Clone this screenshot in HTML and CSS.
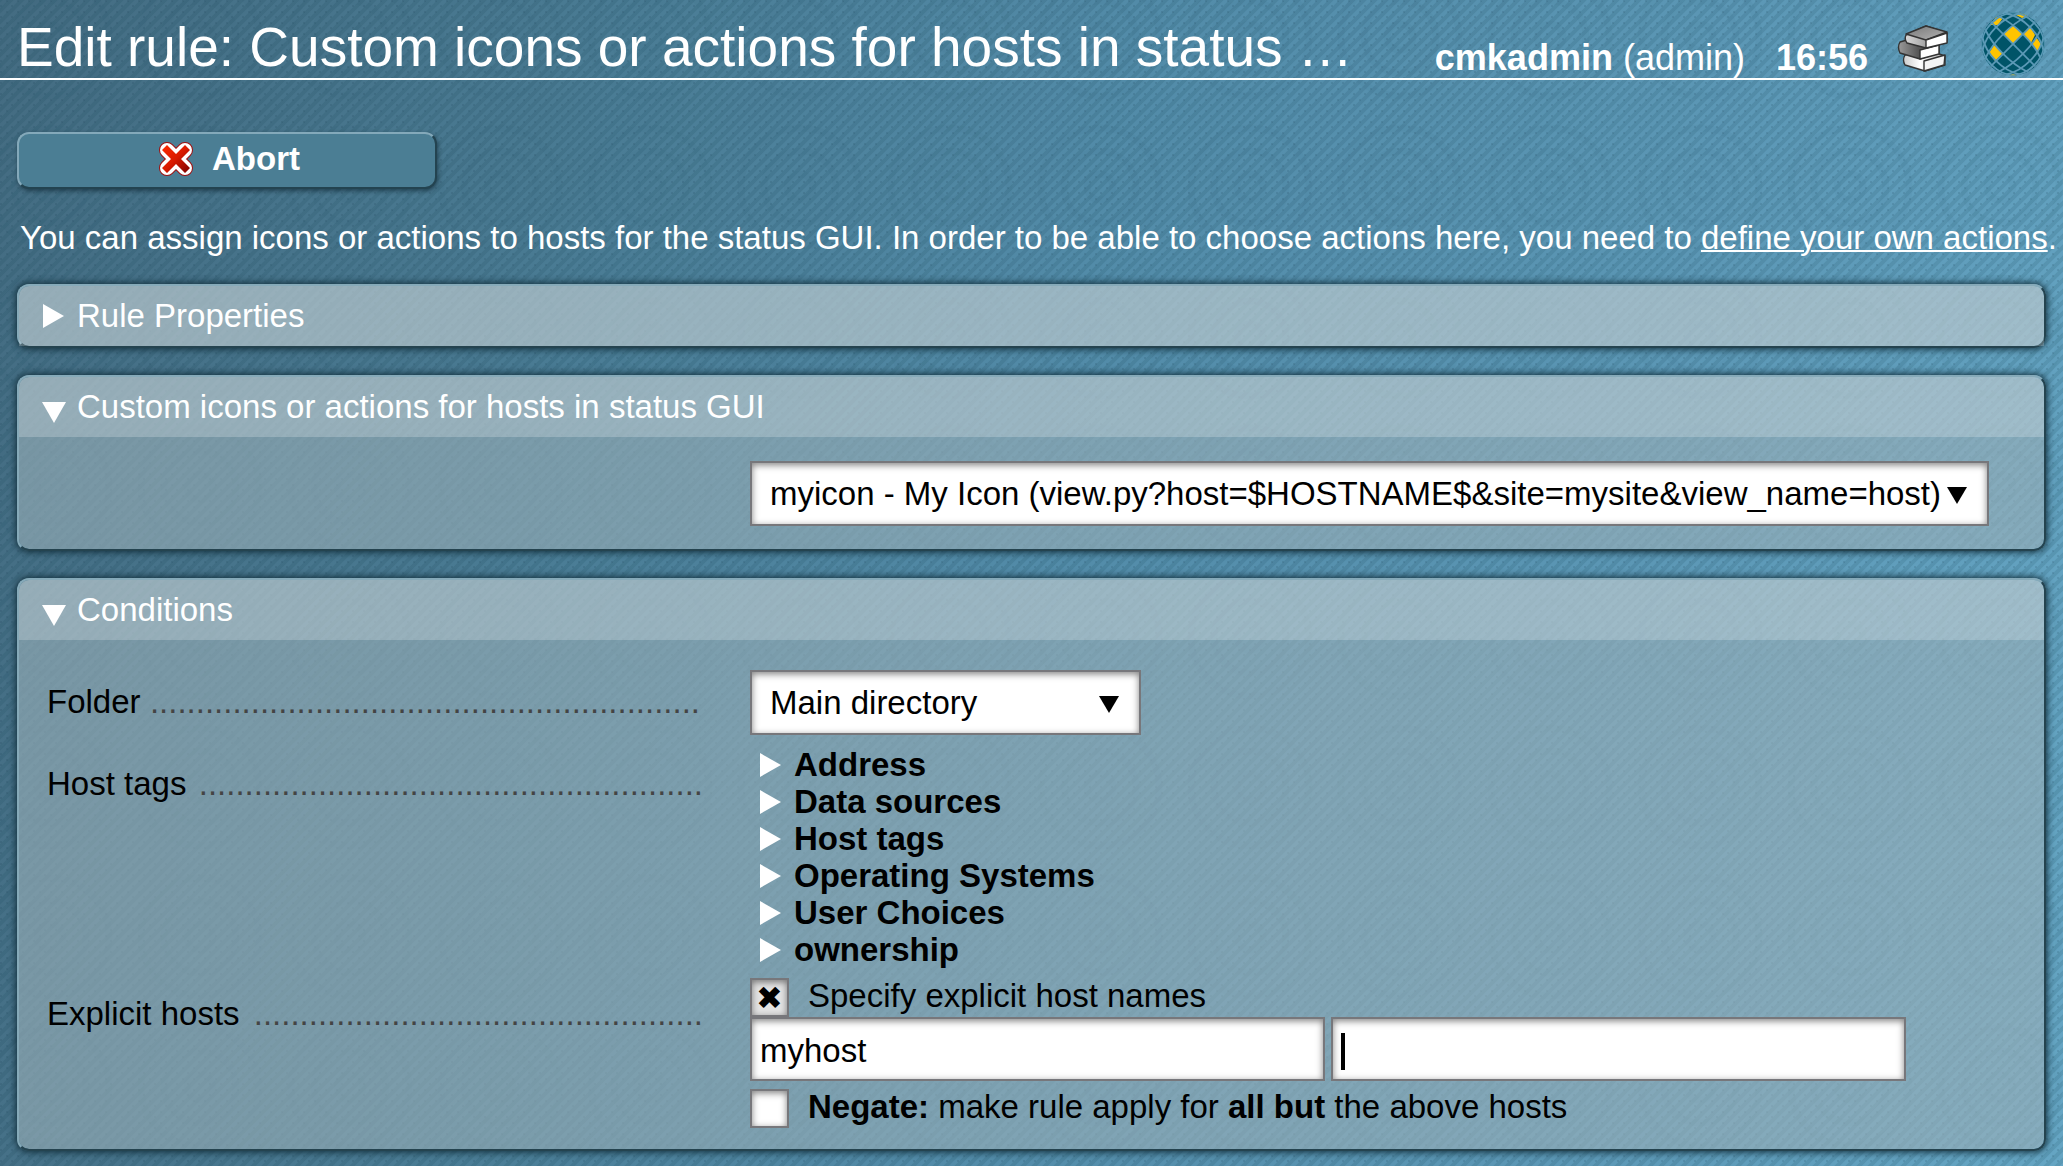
FILE: index.html
```
<!DOCTYPE html>
<html lang="en">
<head>
<meta charset="utf-8">
<title>Edit rule: Custom icons or actions for hosts in status GUI</title>
<link rel="stylesheet" href="styles.css">
</head>
<body>
<svg class="backdrop" aria-hidden="true">
  <defs>
    <pattern id="stripes" width="11" height="11" patternUnits="userSpaceOnUse">
      <path d="M-3 3L3 -3M-3 14L14 -3M8 14L14 8" stroke="#123a50" stroke-opacity=".13" stroke-width="4"/>
      <path d="M0 5h2v2h-2zM6 0h2v2h-2z" fill="#123a50" fill-opacity=".14"/>
    </pattern>
    <pattern id="rings" x="125" y="112" width="150" height="150" patternUnits="userSpaceOnUse">
      <g fill="none" stroke="#123a50" stroke-opacity=".045" stroke-width="7">
        <circle cx="75" cy="75" r="13"/><circle cx="75" cy="75" r="36"/><circle cx="75" cy="75" r="59"/>
      </g>
    </pattern>
  </defs>
  <rect width="100%" height="100%" fill="url(#stripes)"/>
  <rect width="100%" height="100%" fill="url(#rings)"/>
</svg>

<header class="top">
  <h1 class="title">Edit rule: Custom icons or actions for hosts in status …</h1>
  <p class="user"><b>cmkadmin</b> (admin)</p>
  <time class="clock">16:56</time>
  <a class="books" href="#" aria-label="Manual">
    <svg width="52" height="50" viewBox="0 0 52 50">
      <defs>
        <linearGradient id="cover" x1="0" y1="0" x2="1" y2="1"><stop offset="0" stop-color="#777"/><stop offset="1" stop-color="#b4b4b4"/></linearGradient>
        <linearGradient id="spine" x1="0" y1="0" x2="1" y2="0"><stop offset="0" stop-color="#d8d8d8"/><stop offset="1" stop-color="#707070"/></linearGradient>
        <linearGradient id="pale" x1="0" y1="0" x2="1" y2="0"><stop offset="0" stop-color="#ccc"/><stop offset=".4" stop-color="#fff"/><stop offset="1" stop-color="#aaa"/></linearGradient>
        <linearGradient id="dark" x1="0" y1="0" x2="1" y2="0"><stop offset="0" stop-color="#9a9a9a"/><stop offset=".5" stop-color="#555"/><stop offset="1" stop-color="#777"/></linearGradient>
      </defs>
      <g stroke="#333" stroke-width="1.4" stroke-linejoin="round">
        <path d="M8 31L28 25 48 32V41L28 47 8 41Q5 36 8 31Z" fill="url(#pale)"/>
        <path d="M27 37L48 31 47 41 27 47Z" fill="#f4f4f4"/>
        <path d="M3 18L24 12 42 20V29L23 35 3 29Q0 23 3 18Z" fill="url(#dark)"/>
        <path d="M23 26L42 21 42 30 23 35Z" fill="#fff"/>
        <path d="M9 11L29 2 50 9V18L29 24 10 19Q7 15 9 11Z" fill="url(#spine)"/>
        <path d="M9 10L29 2 50 8 29 16Z" fill="url(#cover)"/>
        <path d="M29 16L50 9V19L29 24Z" fill="#fff"/>
      </g>
    </svg>
  </a>
  <a class="globe" href="#" aria-label="Home">
    <svg width="64" height="64" viewBox="0 0 64 64">
      <defs><clipPath id="ball"><circle cx="32" cy="32" r="31.500"/></clipPath></defs>
      <g clip-path="url(#ball)">
        <rect width="64" height="64" fill="#005468"/>
        <g fill="#ffc400"><path d="M32 32L42 22 32 13 22 22Z"/><path d="M42 22L49 14 54 23 50 31Z"/><path d="M51 32L55 25 60 32 57 40Z"/><path d="M14 49L8 41 13 33 22 41Z"/><path d="M9 13L15 5 22 6 17 13Z"/><path d="M35 3L42 0 47 4 41 6Z"/><path d="M26 64L32 62 38 64Z"/></g>
        <g fill="none" stroke="#5b99b6" stroke-width="1.800">
          <g transform="translate(32 32) rotate(45)"><path d="M0 -40V40"/><ellipse rx="14" ry="40"/><ellipse rx="24" ry="37"/><ellipse rx="30" ry="34"/></g>
          <g transform="translate(32 32) rotate(-45)"><path d="M0 -40V40"/><ellipse rx="14" ry="40"/><ellipse rx="24" ry="37"/><ellipse rx="30" ry="34"/></g>
        </g>
      </g>
    </svg>
  </a>
</header>

<main class="page">
  <button class="abort" type="button">
    <svg width="36" height="36" viewBox="0 0 36 36" aria-hidden="true">
      <defs><linearGradient id="red" x1="0" y1="0" x2="1" y2="1"><stop offset="0" stop-color="#ff2a00"/><stop offset=".5" stop-color="#d81a00"/><stop offset="1" stop-color="#7a0000"/></linearGradient></defs>
      <path d="M9 9L27 27M27 9L9 27" stroke="#a01010" stroke-width="16" stroke-linecap="round"/>
      <path d="M9 9L27 27M27 9L9 27" stroke="#fff" stroke-width="14" stroke-linecap="round"/>
      <path d="M9 4L18 13 27 4 32 9 23 18 32 27 27 32 18 23 9 32 4 27 13 18 4 9Z" fill="url(#red)"/>
    </svg>
    Abort
  </button>

  <p class="help">You can assign icons or actions to hosts for the status GUI. In order to be able to choose actions here, you need to <a href="#">define your own actions</a>.</p>

  <section class="panel">
    <h2 class="panel-head"><svg class="arrow" viewBox="0 0 22 26" aria-hidden="true"><path d="M0 1L21 13 0 25Z"/></svg>Rule Properties</h2>
  </section>

  <section class="panel">
    <h2 class="panel-head"><svg class="arrow open" viewBox="0 0 26 22" aria-hidden="true"><path d="M1 0H25L13 21Z"/></svg>Custom icons or actions for hosts in status GUI</h2>
    <div class="icon-row">
      <span class="picker wide"><select aria-label="Icon or action"><option>myicon - My Icon (view.py?host=$HOSTNAME$&amp;site=mysite&amp;view_name=host)</option></select></span>
    </div>
  </section>

  <section class="panel">
    <h2 class="panel-head"><svg class="arrow open" viewBox="0 0 26 22" aria-hidden="true"><path d="M1 0H25L13 21Z"/></svg>Conditions</h2>
    <div class="form">
      <div class="row folder">
        <div class="legend"><label for="folder">Folder</label><span class="dots" aria-hidden="true">............................................................</span></div>
        <span class="picker"><select id="folder"><option>Main directory</option></select></span>
      </div>
      <div class="row tags">
        <div class="legend"><span>Host tags</span><span class="dots" aria-hidden="true">.......................................................</span></div>
        <ul class="tree">
          <li><svg class="arrow" viewBox="0 0 22 26" aria-hidden="true"><path d="M0 1L21 13 0 25Z"/></svg>Address</li>
          <li><svg class="arrow" viewBox="0 0 22 26" aria-hidden="true"><path d="M0 1L21 13 0 25Z"/></svg>Data sources</li>
          <li><svg class="arrow" viewBox="0 0 22 26" aria-hidden="true"><path d="M0 1L21 13 0 25Z"/></svg>Host tags</li>
          <li><svg class="arrow" viewBox="0 0 22 26" aria-hidden="true"><path d="M0 1L21 13 0 25Z"/></svg>Operating Systems</li>
          <li><svg class="arrow" viewBox="0 0 22 26" aria-hidden="true"><path d="M0 1L21 13 0 25Z"/></svg>User Choices</li>
          <li><svg class="arrow" viewBox="0 0 22 26" aria-hidden="true"><path d="M0 1L21 13 0 25Z"/></svg>ownership</li>
        </ul>
      </div>
      <div class="row hosts">
        <div class="legend"><span>Explicit hosts</span><span class="dots" aria-hidden="true">.................................................</span></div>
        <div class="host-fields">
          <label class="check"><input type="checkbox" checked>Specify explicit host names</label>
          <div class="names">
            <input type="text" value="myhost" aria-label="Host name 1">
            <span class="active"><input type="text" value="" aria-label="Host name 2" autofocus></span>
          </div>
          <label class="check negate"><input type="checkbox"><span><b>Negate:</b> make rule apply for <b>all but</b> the above hosts</span></label>
        </div>
      </div>
    </div>
  </section>
</main>
</body>
</html>
```
FILE: styles.css
```
* { box-sizing: border-box; }

body {
  position: relative;
  margin: 0;
  min-height: 100vh;
  background: linear-gradient(100deg, #446c82 0%, #497a92 25%, #528ba8 50%, #5b96b4 75%, #65a5c3 100%);
  color: #000;
  font: 33px/38px "Liberation Sans", Arial, sans-serif;
}

h1, h2, p, ul { margin: 0; padding: 0; font-weight: normal; }

.backdrop {
  position: absolute;
  inset: 0;
  width: 100%;
  height: 100%;
  z-index: -1;
}

.top {
  display: flex;
  align-items: flex-end;
  height: 80px;
  padding: 0 18px 0 17px;
  border-bottom: 2px solid #fff;
  color: #fff;
}

.title { flex: 1; font-size: 55px; line-height: 62px; white-space: nowrap; }
.user, .clock { font-size: 36px; line-height: 40px; white-space: nowrap; }
.clock { margin-left: 31px; font-weight: bold; }
.books { margin: 0 32px 4px 29px; height: 50px; }
.globe { height: 64px; margin-bottom: 2px; }
.top svg { display: block; }

.page { padding: 52px 17px 14px; }

.abort {
  display: flex;
  align-items: center;
  justify-content: center;
  gap: 18px;
  width: 420px;
  height: 57px;
  padding: 0 0 4px 4px;
  border: 2px solid;
  border-color: #84a9ba #234350 #234350 #84a9ba;
  border-radius: 12px;
  background: #4b7e94;
  box-shadow: 1px 2px 4px rgba(0, 20, 30, .5);
  color: #fff;
  font: bold 33px/38px "Liberation Sans", Arial, sans-serif;
}

.help { margin: 30px -17px 27px 3px; color: #fff; }
.help a { color: #fff; text-decoration-thickness: 2px; }

.panel {
  margin-bottom: 27px;
  border: 2px solid;
  border-color: #86aab9 #24434f #24434f #86aab9;
  border-radius: 12px;
  background: rgba(156, 178, 187, .6);
  background-clip: padding-box;
  box-shadow: 0 0 7px 1px #102c38;
}
.panel:last-child { margin-bottom: 0; }

.panel-head {
  display: flex;
  align-items: center;
  height: 60px;
  padding: 0 0 1px 24px;
  border-radius: 10px 10px 0 0;
  background: rgba(255, 255, 255, .22);
  color: #fff;
  font-size: 33px;
}

.arrow { width: 22px; height: 26px; margin-right: 12px; fill: #fff; }
.arrow.open { width: 26px; height: 22px; margin: 12px 10px 0 -2px; }

.icon-row { padding: 24px 55px 23px 731px; }

.picker { position: relative; display: block; width: 391px; }
.picker.wide { width: auto; }
.picker::after {
  content: "";
  position: absolute;
  right: 22px;
  top: 26px;
  border: solid transparent;
  border-width: 17px 10px 0;
  border-top-color: #000;
}

select, input[type="text"], input[type="checkbox"] {
  appearance: none;
  margin: 0;
  border: 2px solid #77777b;
  border-radius: 0;
  background: #fff;
  box-shadow: inset 0 2px 7px rgba(0, 0, 0, .5);
  color: #000;
  font: inherit;
}

select { display: block; width: 100%; height: 65px; padding: 0 18px; }

.form { padding: 30px 28px 21px; }
.row { display: grid; grid-template-columns: 656px 1fr; column-gap: 47px; }
.legend { display: flex; justify-content: space-between; white-space: nowrap; }
.dots { color: #444; }
.folder .legend { padding: 13px 3px 0 0; }
.tags .legend { padding-top: 30px; }
.hosts .legend { padding-top: 27px; }

.tree { padding: 11px 0 0 10px; list-style: none; font-weight: bold; line-height: 37px; }
.tree li { display: flex; align-items: center; }

.host-fields { padding-top: 10px; }
.check { display: flex; gap: 19px; line-height: 36px; }
.check input { display: grid; place-items: center; width: 39px; height: 39px; }
.check input:checked { background: #e4e4e4; }
.check input:checked::before { content: "✖"; font: 32px/32px "DejaVu Sans", sans-serif; }
.names { display: flex; gap: 6px; }
.names input { width: 575px; height: 64px; padding: 4px 8px 0; }
.names input:focus { outline: none; caret-color: transparent; }
.active { position: relative; display: flex; }
.active:focus-within::after {
  content: "";
  position: absolute;
  left: 10px;
  top: 16px;
  width: 4px;
  height: 37px;
  background: #000;
}
.negate { margin-top: 8px; }
```
